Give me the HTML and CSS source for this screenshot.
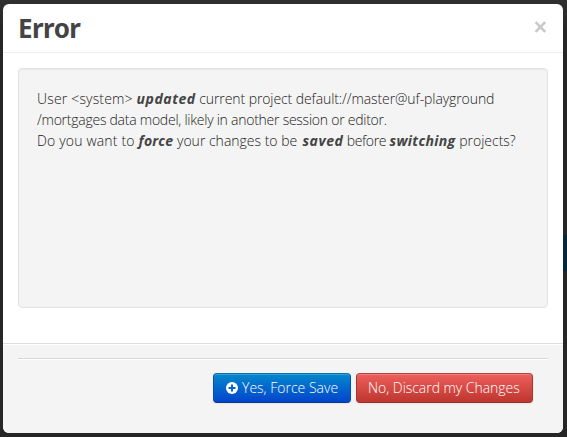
FILE: index.html
```html
<!DOCTYPE html>
<html lang="en">
<head>
<meta charset="utf-8">
<title>Error</title>
<link rel="stylesheet" href="styles.css">
</head>
<body>
<span class="behind"></span>
<div class="modal">
  <div class="modal-header">
    <h3>Error</h3>
    <button class="close" aria-label="Close"><svg width="13" height="12" viewBox="0 0 13 12"><path d="M1.6 1.2 11.2 10.8M11.2 1.2 1.6 10.8"/></svg></button>
  </div>
  <div class="modal-body">
    <div class="well">
      <div class="line"><span class="lead">User &lt;system&gt; </span><b class="wide">updated</b><span class="path"> current project default://master@uf-playground</span></div>
      <div class="line two">/mortgages data model, likely in another session or editor.</div>
      <div class="line"><span class="lead">Do you want to </span><b>force</b> your changes to be&nbsp;<b class="wide saved">saved</b><span class="tight"> before </span><b class="switching">switching</b> projects?</div>
    </div>
  </div>
  <div class="modal-footer">
    <hr>
    <div class="actions">
      <button class="btn primary"><svg width="12" height="12" viewBox="0 0 12 12"><circle cx="6" cy="6" r="6"/><path d="M6 2.5v7M2.5 6h7"/></svg><span>Yes, Force Save</span></button>
      <button class="btn danger"><span>No, Discard my Changes</span></button>
    </div>
  </div>
</div>
</body>
</html>
```
FILE: styles.css
```css
* { box-sizing: border-box; }
body {
  margin: 0;
  height: 437px;
  padding: 4px 4px 4px 3px;
  overflow: hidden;
  background: linear-gradient(#303030, #262626 30px);
  font-family: "Open Sans", "Noto Sans", sans-serif;
  font-size: 14px;
  font-weight: 300;
  color: #222;
}
.behind { position: absolute; left: 563px; top: 235px; width: 4px; height: 36px; background: #06263a; }
.modal {
  display: flex;
  flex-direction: column;
  height: 429px;
  border-radius: 6px;
  overflow: hidden;
  background: #fff;
}
.modal-header {
  display: flex;
  justify-content: space-between;
  height: 49px;
  padding: 0 15px;
  border-bottom: 1px solid #eee;
}
h3 { margin: 4px 0 0; font: 700 26px/40px "Noto Sans", sans-serif; letter-spacing: -.55px; color: #444; }
.close { width: 13px; height: 13px; margin: 16px 1px 0 0; padding: 0; border: 0; background: none; }
.close svg { display: block; fill: none; stroke: #c8c8c8; stroke-width: 2.6; }
.modal-body { height: 290px; padding: 15px; }
.well {
  height: 240px;
  padding: 19px 18px;
  border: 1px solid #e3e3e3;
  border-radius: 4px;
  background: #f4f4f4;
  box-shadow: inset 0 1px 1px rgba(0, 0, 0, .05);
}
.line { height: 21px; line-height: 21px; white-space: nowrap; }
.line b { font-weight: 700; font-style: italic; letter-spacing: .2px; color: #444; }
.lead { letter-spacing: .17px; }
.line .wide { letter-spacing: .55px; }
.line .saved { margin-left: 1.5px; }
.path { letter-spacing: -.09px; }
.two { letter-spacing: -.25px; }
.tight { letter-spacing: -.35px; }
.line .switching { letter-spacing: .35px; }
.modal-footer {
  flex: 1;
  padding: 14px 15px 0;
  border-top: 1px solid #ddd;
  background: #f4f4f4;
  box-shadow: inset 0 1px 0 #fff;
}
hr { height: 2px; margin: 0 0 13px; border: 0; border-top: 1px solid #d8d8d8; border-bottom: 1px solid #fff; }
.actions { display: flex; justify-content: flex-end; gap: 5px; padding-right: 15px; }
.btn {
  display: flex;
  align-items: center;
  height: 30px;
  padding: 0 11px;
  border: 1px solid;
  border-radius: 4px;
  font: inherit;
  line-height: 20px;
  white-space: nowrap;
  color: #fff;
  box-shadow: inset 0 1px 0 rgba(255, 255, 255, .2), 0 1px 2px rgba(0, 0, 0, .05);
}
.primary { width: 138px; gap: 4px; padding-left: 12px; border-color: #0670b4 #0450a8 #033b94; background: linear-gradient(#0488cc, #0444cc); }
.primary svg { flex: none; fill: #fff; stroke: #0565cc; stroke-width: 2; }
.primary circle { stroke: none; }
.danger { width: 177px; border-color: #b34441 #a83530 #9c2f2a; background: linear-gradient(#ee5f5b, #bd362f); }
.danger span { letter-spacing: -.04px; }
```
